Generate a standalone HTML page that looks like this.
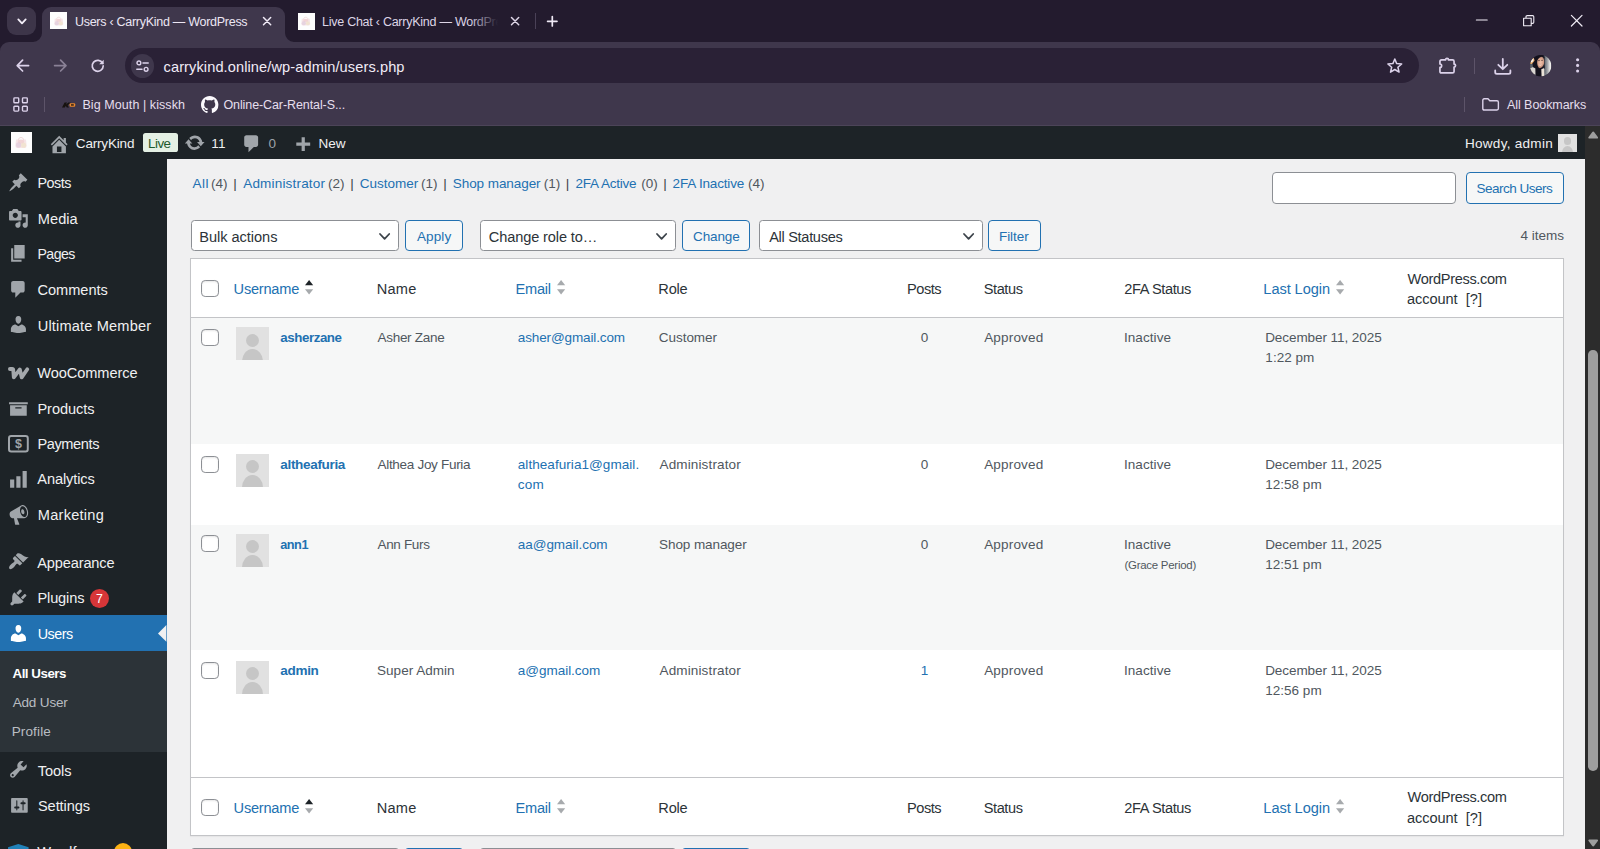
<!DOCTYPE html>
<html><head><meta charset="utf-8"><title>Users ‹ CarryKind — WordPress</title>
<style>
*{box-sizing:border-box;margin:0;padding:0}
html,body{width:1600px;height:849px;overflow:hidden;font-family:"Liberation Sans",sans-serif}
body{position:relative;background:#f0f0f1;font-family:"Liberation Sans",sans-serif}
.a{position:absolute}
.t{position:absolute;white-space:nowrap;display:block;line-height:20px}
svg{position:absolute;overflow:visible}
.sel{position:absolute;background:#fff;border:1px solid #8c8f94;border-radius:3.5px;height:31px;top:220px}
.btn{position:absolute;background:#f6f7f7;border:1px solid #2271b1;border-radius:4px;height:31px;top:220px}
.cb{position:absolute;width:17.2px;height:17.2px;left:201.4px;background:#fff;border:1.1px solid #8c8f94;border-radius:4.2px;box-shadow:inset 0 1px 2px rgba(0,0,0,.1)}
.av{position:absolute;left:235.6px;width:33.4px;height:33.2px;background:#e1e1e1;overflow:hidden}
.av i{position:absolute;background:#c6c6c6;border-radius:50%}
.av i.h{left:10.2px;top:6.6px;width:13.2px;height:13.2px}
.av i.b{left:6.6px;top:21.6px;width:20.4px;height:30px;border-radius:10.2px 10.2px 0 0/13px 13px 0 0}
.row{position:absolute;left:191.1px;width:1371.8px}
.ic{fill:#a0a5aa}
</style></head><body>

<!-- ============ BROWSER CHROME ============ -->
<div class="a" style="left:0;top:0;width:1600px;height:54px;background:#231b2e"></div>
<div class="a" style="left:0;top:41.8px;width:1600px;height:84px;background:#3f374c;border-radius:9px 9px 0 0"></div>
<!-- tab search button -->
<div class="a" style="left:6.8px;top:6.8px;width:29px;height:28.4px;background:#3d3549;border-radius:9px"></div>
<!-- active tab -->
<div class="a" style="left:42.2px;top:6.7px;width:242.4px;height:36.7px;background:#3f374c;border-radius:9px 9px 0 0"></div>
<svg style="left:33.2px;top:32.8px" width="9" height="9" viewBox="0 0 9 9"><path d="M9 0V9H0A9 9 0 0 0 9 0Z" fill="#3f374c"/></svg>
<svg style="left:284.6px;top:32.8px" width="9" height="9" viewBox="0 0 9 9"><path d="M0 0V9H9A9 9 0 0 1 0 0Z" fill="#3f374c"/></svg>
<!-- fade for 2nd tab title -->
<div class="a" style="left:470px;top:8px;width:36px;height:28px;background:linear-gradient(90deg,rgba(35,27,46,0),#231b2e 78%);z-index:5"></div>
<div class="a" style="left:534.6px;top:12.6px;width:1.2px;height:16.6px;background:#4a4157;z-index:6"></div>
<!-- url box -->
<div class="a" style="left:125.2px;top:48.4px;width:1294px;height:34.8px;background:#2a2136;border-radius:17.4px"></div>
<div class="a" style="left:0;top:124.6px;width:1600px;height:1.1px;background:#4c4458"></div>
<div class="a" style="left:130.6px;top:54px;width:23.8px;height:23.8px;background:#3f374c;border-radius:50%"></div>
<!-- toolbar separators -->
<div class="a" style="left:1474.2px;top:58.2px;width:1.3px;height:15.6px;background:#5d5469"></div>
<div class="a" style="left:44.2px;top:96.6px;width:1.3px;height:15.6px;background:#5d5469"></div>
<div class="a" style="left:1463.8px;top:96.6px;width:1.3px;height:15.6px;background:#5d5469"></div>
<svg style="left:16.9px;top:17.8px" width="10" height="7.6" viewBox="0 0 10 7.6"><path d="M1.300 1.400L5 5.400L8.700 1.400" fill="none" stroke="#f3eef8" stroke-width="1.8" stroke-linecap="round" stroke-linejoin="round" /></svg>
<div class="a" style="left:50px;top:12.4px;width:17px;height:17px;background:#fdfdfd"></div><svg style="left:53.57px;top:15.74px" width="9.53" height="9.85" viewBox="0 0 12 12.400"><path d="M3.300 4.200C3.300 .6 8.700 .6 8.700 4.200" fill="none" stroke="#eccfd0" stroke-width="1" opacity=".8"/><path d="M1 3.600H11L11.600 9.800Q11.600 12 9.600 12H2.400Q.4 12 .4 9.800z" fill="#f3dcdf" opacity=".75"/><ellipse cx="3.600" cy="9" rx="2.600" ry="2.800" fill="#dcc6dc" opacity=".6"/><ellipse cx="8.600" cy="9.200" rx="2.500" ry="2.600" fill="#f0e2c8" opacity=".7"/><ellipse cx="6" cy="5.600" rx="3.200" ry="1.800" fill="#eec3c6" opacity=".5"/></svg>
<div class="a" style="left:297.5px;top:12.5px;width:17px;height:17px;background:#fdfdfd"></div><svg style="left:301.07px;top:15.84px" width="9.53" height="9.85" viewBox="0 0 12 12.400"><path d="M3.300 4.200C3.300 .6 8.700 .6 8.700 4.200" fill="none" stroke="#eccfd0" stroke-width="1" opacity=".8"/><path d="M1 3.600H11L11.600 9.800Q11.600 12 9.600 12H2.400Q.4 12 .4 9.800z" fill="#f3dcdf" opacity=".75"/><ellipse cx="3.600" cy="9" rx="2.600" ry="2.800" fill="#dcc6dc" opacity=".6"/><ellipse cx="8.600" cy="9.200" rx="2.500" ry="2.600" fill="#f0e2c8" opacity=".7"/><ellipse cx="6" cy="5.600" rx="3.200" ry="1.800" fill="#eec3c6" opacity=".5"/></svg>
<svg style="left:262.7px;top:16.9px" width="8.2" height="8.2" viewBox="0 0 8.2 8.2"><path d="M0.500 0.500L7.699999999999999 7.699999999999999M7.699999999999999 0.500L0.500 7.699999999999999" fill="none" stroke="#f0eaf6" stroke-width="1.5" stroke-linecap="round" stroke-linejoin="round" /></svg>
<svg style="left:510.69999999999993px;top:17.1px" width="8.2" height="8.2" viewBox="0 0 8.2 8.2"><path d="M0.500 0.500L7.699999999999999 7.699999999999999M7.699999999999999 0.500L0.500 7.699999999999999" fill="none" stroke="#ddd5e6" stroke-width="1.5" stroke-linecap="round" stroke-linejoin="round" /></svg>
<svg style="left:547.4px;top:16.0px" width="10.6" height="10.6" viewBox="0 0 10.6 10.6"><path d="M5.300 .6V10M.6 5.300H10" fill="none" stroke="#efe9f5" stroke-width="1.7" stroke-linecap="round" stroke-linejoin="round" /></svg>
<svg style="left:1476px;top:18.5px" width="11.6" height="2" viewBox="0 0 11.6 2"><path d="M.4 1H11.200" fill="none" stroke="#f4f0f8" stroke-width="1.15" stroke-linecap="round" stroke-linejoin="round" /></svg>
<svg style="left:1523px;top:15px" width="11.4" height="11.4" viewBox="0 0 11.4 11.4"><path d="M.6 3.200H8.200V10.800H.6zM3 3V1.800Q3 .6 4.200 .6H9.600Q10.800 .6 10.800 1.800V7.200Q10.800 8.400 9.600 8.400H8.400" fill="none" stroke="#f1edf6" stroke-width="1.1" stroke-linecap="round" stroke-linejoin="round" /></svg>
<svg style="left:1571.2px;top:15px" width="11.4" height="11.4" viewBox="0 0 11.4 11.4"><path d="M.4 .4L11 11M11 .4L.4 11" fill="none" stroke="#f1edf6" stroke-width="1.2" stroke-linecap="round" stroke-linejoin="round" /></svg>
<svg style="left:16.4px;top:59.2px" width="13.2" height="13.2" viewBox="0 0 13.2 13.2"><path d="M12.600 6.600H1.400M6.600 1.200L1.200 6.600L6.600 12" fill="none" stroke="#dcd2ea" stroke-width="1.7" stroke-linecap="round" stroke-linejoin="round" /></svg>
<svg style="left:53.6px;top:59.2px" width="13.2" height="13.2" viewBox="0 0 13.2 13.2"><path d="M.6 6.600H11.800M6.600 1.200L12 6.600L6.600 12" fill="none" stroke="#8a8196" stroke-width="1.7" stroke-linecap="round" stroke-linejoin="round" /></svg>
<svg style="left:91.4px;top:59px" width="13.4" height="13.4" viewBox="0 0 13.4 13.4"><path d="M11.600 4.300A5.500 5.500 0 1 0 12.200 6.900" fill="none" stroke="#dcd2ea" stroke-width="1.7" stroke-linecap="round" stroke-linejoin="round" /><path d="M12.700 .7V5.200H8.200z" fill="#dcd2ea"/></svg>
<svg style="left:136.2px;top:59.8px" width="13" height="12.2" viewBox="0 0 13 12.2"><circle cx="2.900" cy="2.900" r="1.900" fill="none" stroke="#dcd2ea" stroke-width="1.400"/><path d="M7 2.900H12.200" fill="none" stroke="#dcd2ea" stroke-width="1.5" stroke-linecap="round" stroke-linejoin="round" /><circle cx="10.100" cy="9.300" r="1.900" fill="none" stroke="#dcd2ea" stroke-width="1.400"/><path d="M.8 9.300H6" fill="none" stroke="#dcd2ea" stroke-width="1.5" stroke-linecap="round" stroke-linejoin="round" /></svg>
<svg style="left:1386.6px;top:58.2px" width="15.6" height="15" viewBox="0 0 15.6 15"><path d="M7.800 1L9.700 5.600L14.700 6L10.900 9.200L12.100 14.100L7.800 11.500L3.500 14.100L4.700 9.200L.9 6L5.900 5.600z" fill="none" stroke="#dcd2ea" stroke-width="1.5" stroke-linecap="round" stroke-linejoin="round" /></svg>
<svg style="left:1438.6px;top:56.3px" width="17.9" height="17.9" viewBox="0 0 19 19"><path d="M2.600 4.200H6.900A1.600 1.600 0 0 1 10.100 4.200H14.400Q16 4.200 16 5.800V8.600A1.600 1.600 0 0 1 16 11.800V16.400Q16 18 14.400 18H2.600Q1 18 1 16.400V12.100A1.800 1.800 0 0 0 1 8.500V5.800Q1 4.200 2.600 4.200Z" fill="none" stroke="#dcd2ea" stroke-width="1.8" stroke-linecap="round" stroke-linejoin="round" /></svg>
<svg style="left:1494px;top:57.8px" width="17.6" height="17" viewBox="0 0 17.6 17"><path d="M8.800 1V11M4.300 6.800L8.800 11.200L13.300 6.800M1.200 12.400V14.200Q1.200 15.800 2.800 15.800H14.800Q16.400 15.800 16.400 14.200V12.400" fill="none" stroke="#dcd2ea" stroke-width="1.8" stroke-linecap="round" stroke-linejoin="round" /></svg>
<svg style="left:1529.7px;top:54.7px" width="21.4" height="21.4" viewBox="0 0 21.4 21.4"><defs><clipPath id="avc"><circle cx="10.700" cy="10.700" r="10.700"/></clipPath><radialGradient id="avf" cx=".55" cy=".5" r=".62"><stop offset="0" stop-color="#efc3ae"/><stop offset=".55" stop-color="#d6a089"/><stop offset="1" stop-color="#7c584c"/></radialGradient><linearGradient id="avw" x1="0" x2="1"><stop offset="0" stop-color="#4f5660"/><stop offset=".45" stop-color="#9a9ea3"/><stop offset=".8" stop-color="#e9e7e5"/><stop offset="1" stop-color="#f4f3f2"/></linearGradient></defs><g clip-path="url(#avc)"><rect width="21.400" height="21.400" fill="#15131f"/><rect x="13.800" y="0" width="7.600" height="21.400" fill="url(#avw)"/><path d="M0 3H3.800L4.600 5.500L2 9H0z" fill="#e3a768"/><path d="M.8 4.500L3.600 3.400L3.200 6.200L.6 8z" fill="#f7f3ee"/><path d="M0 12.800L2.600 12L5.600 13.600L5.800 19.600L3 21.400H0z" fill="#d9d5d1"/><path d="M0 9H2.500L3 12L0 13z" fill="#5a6068"/><ellipse cx="10.100" cy="7.200" rx="4.200" ry="6" fill="url(#avf)" transform="rotate(8 10.100 7.200)"/><path d="M8.300 9.300Q10.200 10.600 12 9.200Q10.300 11.900 8.300 9.300z" fill="#fbf3ef"/><path d="M8.200 5.700Q9 5.200 9.800 5.700M11.300 5.500Q12.100 5 12.900 5.500" stroke="#3a2a28" stroke-width=".7" fill="none"/><path d="M5.600 21.400V13L8.400 12.600Q9.800 14.800 11.600 13.600V21.400z" fill="#14121d"/><path d="M11.300 14.200L14.200 13L14.400 21.400H11.600z" fill="#ebe3d8"/><path d="M6.400 13.500C4.600 8.500 4.600 2.200 8 .8L12.500 0L14.800 1.500C11.500 1 8.600 2.200 7.400 5.200C6.800 7.500 7.200 10.500 8.600 12.600z" fill="#13111c"/><path d="M13.600 1.200C14.800 3.500 14.600 9 13.800 13L15 14V2z" fill="#2b2d36"/></g></svg>
<svg style="left:1576.2px;top:58.3px" width="3.2" height="15.4" viewBox="0 0 3.2 15.4"><circle cx="1.600" cy="1.700" r="1.550" fill="#dcd2ea"/><circle cx="1.600" cy="7.400" r="1.550" fill="#dcd2ea"/><circle cx="1.600" cy="13.100" r="1.550" fill="#dcd2ea"/></svg>
<svg style="left:12.6px;top:96.8px" width="15.4" height="15.2" viewBox="0 0 15.4 15.2"><rect x="0.9" y="0.9" width="4.800" height="4.800" rx=".8" fill="none" stroke="#dcd2ea" stroke-width="1.400"/><rect x="0.9" y="9.3" width="4.800" height="4.800" rx=".8" fill="none" stroke="#dcd2ea" stroke-width="1.400"/><rect x="9.5" y="0.9" width="4.800" height="4.800" rx=".8" fill="none" stroke="#dcd2ea" stroke-width="1.400"/><rect x="9.5" y="9.3" width="4.800" height="4.800" rx=".8" fill="none" stroke="#dcd2ea" stroke-width="1.400"/></svg>
<svg style="left:62.4px;top:101.6px" width="13.6" height="6" viewBox="0 0 13.6 6"><path d="M0 5.600L2.600 .4H5L3.800 2.800L6.400 .4H8.800L5.600 3.200L7 5.600H4.800L3.800 3.800L2.800 5.600z" fill="#17120f"/><rect x="7.600" y="1.200" width="5.600" height="3.600" rx="1" fill="#e8872b"/><rect x="9" y="2.300" width="2.800" height="1.300" fill="#17120f"/></svg>
<svg style="left:200.6px;top:95.6px" width="17.4" height="17.4" viewBox="0 0 16 16"><path fill="#fbf9fd" d="M8 0C3.580 0 0 3.580 0 8c0 3.540 2.290 6.530 5.470 7.590.4.070.55-.17.55-.38 0-.19-.01-.82-.01-1.490-2.010.37-2.530-.49-2.690-.94-.09-.23-.48-.94-.82-1.130-.28-.15-.68-.52-.01-.53.63-.01 1.080.58 1.230.82.72 1.210 1.870.87 2.330.66.070-.52.28-.87.51-1.070-1.780-.2-3.640-.89-3.640-3.950 0-.87.31-1.590.82-2.150-.08-.2-.36-1.020.08-2.120 0 0 .67-.21 2.200.82.64-.18 1.320-.27 2-.27s1.360.09 2 .27c1.530-1.040 2.200-.82 2.200-.82.44 1.100.16 1.920.08 2.120.51.56.82 1.270.82 2.150 0 3.070-1.870 3.750-3.650 3.950.29.25.54.73.54 1.480 0 1.070-.01 1.930-.01 2.200 0 .21.15.46.55.38A8.013 8.013 0 0016 8c0-4.420-3.580-8-8-8z"/></svg>
<svg style="left:1481.8px;top:98.2px" width="17.2" height="12.8" viewBox="0 0 17.2 12.8"><path d="M.8 2.200Q.8 .8 2.200 .8H6L7.800 2.800H15Q16.400 2.800 16.400 4.200V10.600Q16.400 12 15 12H2.200Q.8 12 .8 10.600z" fill="none" stroke="#dcd2ea" stroke-width="1.4" stroke-linecap="round" stroke-linejoin="round" /></svg>

<!-- ============ WP ADMIN BAR ============ -->
<div class="a" style="left:0;top:125.7px;width:1585px;height:33.5px;background:#1d2327"></div>
<div class="a" style="left:142.6px;top:133.4px;width:35.1px;height:18.4px;background:#e4f0e4;border-radius:2.6px"></div>
<svg style="left:48.40px;top:132.50px" width="22.4" height="22.4" viewBox="0 0 20 20"><path fill="#a0a5aa" d="M16 8.5l1.53 1.53-1.06 1.06L10 4.62l-6.47 6.47-1.06-1.06L10 2.5l4 4v-2h2v4zm-6-2.46l6 5.99V18H4v-5.97zM12 17v-5H8v5h4z"/></svg>
<svg style="left:184.20px;top:132.30px" width="21.4" height="21.4" viewBox="0 0 20 20"><path fill="#a0a5aa" d="M10.2 3.28c3.53 0 6.43 2.61 6.92 6h2.08l-3.5 4-3.5-4h2.32c-.45-1.97-2.21-3.45-4.32-3.45-1.45 0-2.73.71-3.54 1.78L4.95 5.66C6.23 4.2 8.11 3.28 10.2 3.28zm-.4 13.44c-3.52 0-6.43-2.61-6.92-6H.8l3.5-4c1.17 1.33 2.33 2.67 3.5 4H5.48c.45 1.97 2.21 3.45 4.32 3.45 1.45 0 2.73-.71 3.54-1.78l1.71 1.95c-1.28 1.46-3.15 2.38-5.25 2.38z"/></svg>
<svg style="left:241.30px;top:133.00px" width="21.4" height="21.4" viewBox="0 0 20 20"><path fill="#a0a5aa" d="M5 2h9c1.1 0 2 .9 2 2v7c0 1.1-.9 2-2 2h-2l-5 5v-5H5c-1.1 0-2-.9-2-2V4c0-1.1.9-2 2-2z"/></svg>
<svg style="left:292.30px;top:134.70px" width="21.4" height="21.4" viewBox="0 0 20 20"><path fill="#a0a5aa" d="M17 7v3h-5v5H9v-5H4V7h5V2h3v5h5z"/></svg>
<div class="a" style="left:10.7px;top:131.6px;width:21.4px;height:21.4px;background:#fdfdfd"></div>
<svg style="left:15.2px;top:135.8px" width="12" height="12.400" viewBox="0 0 12 12.400"><path d="M3.300 4.200C3.300 .6 8.700 .6 8.700 4.200" fill="none" stroke="#eccfd0" stroke-width="1" opacity=".8"/><path d="M1 3.600H11L11.600 9.800Q11.600 12 9.600 12H2.400Q.4 12 .4 9.800z" fill="#f3dcdf" opacity=".75"/><ellipse cx="3.600" cy="9" rx="2.600" ry="2.800" fill="#dcc6dc" opacity=".6"/><ellipse cx="8.600" cy="9.200" rx="2.500" ry="2.600" fill="#f0e2c8" opacity=".7"/><ellipse cx="6" cy="5.600" rx="3.200" ry="1.800" fill="#eec3c6" opacity=".5"/></svg>
<div class="a" style="left:1558.2px;top:133.8px;width:18.4px;height:18.4px;background:#e1e1e1;overflow:hidden"><i class="a" style="left:5.600px;top:3.600px;width:7.200px;height:7.200px;border-radius:50%;background:#c6c6c6"></i><i class="a" style="left:3.600px;top:11.800px;width:11.200px;height:16px;border-radius:5.600px 5.600px 0 0/7px 7px 0 0;background:#c6c6c6"></i></div>

<!-- ============ WP SIDEBAR ============ -->
<div class="a" style="left:0;top:159.2px;width:166.8px;height:690px;background:#1d2327"></div>
<div class="a" style="left:0;top:614.8px;width:166.8px;height:36.4px;background:#2271b1"></div>
<div class="a" style="left:0;top:651.2px;width:166.8px;height:100.8px;background:#2c3338"></div>
<svg style="left:158.4px;top:625.2px" width="8.4" height="16.8" viewBox="0 0 8.4 16.8"><path d="M8.4 0V16.8L0 8.4Z" fill="#f0f0f1"/></svg>
<div class="a" style="left:90px;top:589.2px;width:19px;height:19px;border-radius:50%;background:#d63638"></div>
<div class="a" style="left:114px;top:843.4px;width:18.4px;height:18.4px;border-radius:50%;background:#fcb214"></div>
<svg style="left:8.34px;top:172.19px" width="20.83" height="20.83" viewBox="0 0 20 20"><path fill="#a0a5aa" d="M10.44 3.02l1.82-1.82 6.36 6.35-1.83 1.82c-1.05-.68-2.48-.57-3.41.36l-.75.75c-.92.93-1.04 2.35-.35 3.41l-1.83 1.82-2.41-2.41-2.8 2.79c-.42.42-3.38 2.71-3.8 2.29s1.86-3.39 2.28-3.81l2.79-2.79L4.1 9.36l1.83-1.82c1.05.69 2.48.57 3.4-.36l.75-.75c.93-.92 1.05-2.35.36-3.41z"/></svg>
<svg style="left:8.34px;top:207.69px" width="20.83" height="20.83" viewBox="0 0 20 20"><path fill="#a0a5aa" d="M13 11V4c0-.55-.45-1-1-1h-1.67L9 1H5L3.67 3H2c-.55 0-1 .45-1 1v7c0 .55.45 1 1 1h10c.55 0 1-.45 1-1zM7 4.5c1.38 0 2.5 1.12 2.5 2.5S8.38 9.5 7 9.5 4.5 8.38 4.5 7 5.62 4.5 7 4.5zM14 6h5v10.5c0 1.38-1.12 2.5-2.5 2.5S14 17.88 14 16.5s1.12-2.5 2.5-2.5c.17 0 .34.02.5.05V9h-3V6zm-4 8.05V13h2v3.5c0 1.38-1.12 2.5-2.5 2.5S7 17.88 7 16.5 8.12 14 9.5 14c.17 0 .34.02.5.05z"/></svg>
<svg style="left:8.34px;top:243.49px" width="20.83" height="20.83" viewBox="0 0 20 20"><path fill="#a0a5aa" d="M6 15V2h10v13H6zm-1 1h8v2H3V5h2v11z"/></svg>
<svg style="left:8.34px;top:279.28px" width="20.83" height="20.83" viewBox="0 0 20 20"><path fill="#a0a5aa" d="M5 2h9c1.1 0 2 .9 2 2v7c0 1.1-.9 2-2 2h-2l-5 5v-5H5c-1.1 0-2-.9-2-2V4c0-1.1.9-2 2-2z"/></svg>
<svg style="left:8.34px;top:314.48px" width="20.83" height="20.83" viewBox="0 0 20 20"><path fill="#a0a5aa" d="M10 9.25c-2.27 0-2.73-3.44-2.73-3.44C7 4.02 7.82 2 9.97 2c2.16 0 2.98 2.02 2.71 3.81 0 0-.41 3.44-2.68 3.44zm0 2.57L12.72 10c2.39 0 4.52 2.33 4.52 4.53v2.49s-3.65 1.13-7.24 1.13c-3.65 0-7.24-1.13-7.24-1.13v-2.49c0-2.25 1.94-4.48 4.47-4.48z"/></svg>
<svg style="left:8px;top:366.5px" width="21.2" height="12.600" viewBox="0 0 21.2 12.600"><path d="M1.900 2H4.300Q5.150 2 5.250 3L5.800 10.400L11.850 2.400L13.700 10.400L19.300 2.200" fill="none" stroke="#a4a8ac" stroke-width="3.800" stroke-linecap="round" stroke-linejoin="round"/></svg>
<svg style="left:8.34px;top:397.78px" width="20.83" height="20.83" viewBox="0 0 20 20"><path fill="#a0a5aa" d="M19 4v2H1V4h18zM2 7h16v10H2V7zm11 3V9H7v1h6z"/></svg>
<svg style="left:8.3px;top:434.8px" width="20.8" height="17.4" viewBox="0 0 20.8 17.4"><rect x="1" y="1" width="18.8" height="15.4" rx="2.2" fill="none" stroke="#a0a5aa" stroke-width="2"/><text x="10.4" y="13.3" text-anchor="middle" font-family="Liberation Sans" font-weight="700" font-size="12.5" fill="#a0a5aa">$</text></svg>
<svg style="left:8.34px;top:468.58px" width="20.83" height="20.83" viewBox="0 0 20 20"><path fill="#a0a5aa" d="M18 18V2h-4v16h4zm-6 0V7H8v11h4zm-6 0v-8H2v8h4z"/></svg>
<svg style="left:8.15px;top:504.00px" width="21.8" height="21.8" viewBox="0 0 20 20"><path fill="#a0a5aa" d="M18.15 5.94c.46 1.62.38 3.22-.02 4.48-.42 1.28-1.26 2.18-2.3 2.48-.16.06-.26.06-.4.06-.06.02-.12.02-.18.02-.06.02-.14.02-.22.02h-6.8l2.22 5.5c.02.14-.06.26-.14.34-.08.1-.24.16-.34.16H6.95c-.1 0-.26-.06-.34-.16-.08-.08-.16-.2-.14-.34l-1-5.5H4.25l-.02-.02c-.5.06-1.08-.18-1.54-.62s-.88-1.08-1.06-1.88c-.24-.8-.2-1.56-.02-2.2.18-.62.58-1.08 1.06-1.3l.02-.02 9-5.4c.1-.06.18-.1.24-.16.06-.04.14-.08.24-.12.16-.08.28-.12.5-.18 1.04-.3 2.24.1 3.22.98s1.84 2.24 2.26 3.86zm-2.58 5.98h-.02c.4-.1.74-.34 1.04-.7.58-.7.86-1.76.86-3.04 0-.64-.1-1.3-.28-1.98-.34-1.36-1.02-2.5-1.78-3.24s-1.68-1.1-2.46-.88c-.82.22-1.4.96-1.7 2-.32 1.04-.28 2.36.06 3.72.38 1.36 1 2.5 1.8 3.24.78.74 1.62 1.1 2.48.88zm-2.54-7.08c.22-.04.42-.02.62.04.38.16.76.48 1.02 1s.42 1.2.42 1.78c0 .3-.04.56-.12.8-.18.48-.44.84-.86.94-.34.1-.8-.06-1.14-.4s-.64-.86-.78-1.5c-.18-.62-.12-1.24.02-1.72s.48-.84.82-.94z"/></svg>
<svg style="left:8.34px;top:551.49px" width="20.83" height="20.83" viewBox="0 0 20 20"><path fill="#a0a5aa" d="M14.48 11.06L7.41 3.99l1.5-1.5c.5-.56 2.3-.47 3.51.32 1.21.8 1.43 1.28 2.91 2.1 1.18.64 2.45 1.26 4.45.85zm-.71.71L6.7 4.7 4.93 6.47c-.39.39-.39 1.02 0 1.41l1.06 1.06c.39.39.39 1.03 0 1.42-.6.6-1.43 1.11-2.21 1.69-.35.26-.7.53-1.01.84C1.43 14.23.4 16.08 1.4 17.07c.99 1 2.84-.03 4.18-1.36.31-.31.58-.66.85-1.02.57-.78 1.08-1.61 1.69-2.21.39-.39 1.02-.39 1.41 0l1.06 1.06c.39.39 1.02.39 1.41 0z"/></svg>
<svg style="left:8.34px;top:587.09px" width="20.83" height="20.83" viewBox="0 0 20 20"><path fill="#a0a5aa" d="M13.11 4.36L9.87 7.6 8 5.73l3.24-3.24c.35-.34 1.05-.2 1.56.32.52.51.66 1.21.31 1.55zm-8 1.77l.91-1.12 9.01 9.01-1.19.84c-.71.71-2.63 1.16-3.82 1.16H6.14L4.9 17.26c-.59.59-1.54.59-2.12 0-.59-.58-.59-1.53 0-2.12l1.24-1.24v-3.88c0-1.13.4-3.19 1.09-3.89zm7.26 3.97l3.24-3.24c.34-.35 1.04-.21 1.55.31.52.51.66 1.21.31 1.55l-3.24 3.25z"/></svg>
<svg style="left:8.34px;top:622.69px" width="20.83" height="20.83" viewBox="0 0 20 20"><path fill="#fff" d="M10 9.25c-2.27 0-2.73-3.44-2.73-3.44C7 4.02 7.82 2 9.97 2c2.16 0 2.98 2.02 2.71 3.81 0 0-.41 3.44-2.68 3.44zm0 2.57L12.72 10c2.39 0 4.52 2.33 4.52 4.53v2.49s-3.65 1.13-7.24 1.13c-3.65 0-7.24-1.13-7.24-1.13v-2.49c0-2.25 1.94-4.48 4.47-4.48z"/></svg>
<svg style="left:8.34px;top:759.09px" width="20.83" height="20.83" viewBox="0 0 20 20"><path fill="#a0a5aa" d="M16.68 9.77c-1.34 1.34-3.3 1.67-4.95.99l-5.41 6.52c-.99.99-2.59.99-3.58 0s-.99-2.59 0-3.57l6.52-5.42c-.68-1.65-.35-3.61.99-4.95 1.28-1.28 3.12-1.62 4.72-1.06l-2.89 2.89 2.82 2.82 2.86-2.87c.53 1.58.18 3.39-1.08 4.65zM3.81 16.21c.4.39 1.04.39 1.43 0 .4-.4.4-1.04 0-1.43-.39-.4-1.03-.4-1.43 0-.39.39-.39 1.03 0 1.43z"/></svg>
<svg style="left:9.04px;top:794.69px" width="20.83" height="20.83" viewBox="0 0 20 20"><path fill="#a0a5aa" d="M18 16V4c0-.55-.45-1-1-1H3c-.55 0-1 .45-1 1v12c0 .55.45 1 1 1h14c.55 0 1-.45 1-1zM8 11h1c.55 0 1 .45 1 1s-.45 1-1 1H8v1.5c0 .28-.22.5-.5.5s-.5-.22-.5-.5V13H6c-.55 0-1-.45-1-1s.45-1 1-1h1V5.5c0-.28.22-.5.5-.5s.5.22.5.5V11zm5-2h-1c-.55 0-1-.45-1-1s.45-1 1-1h1V5.5c0-.28.22-.5.5-.5s.5.22.5.5V7h1c.55 0 1 .45 1 1s-.45 1-1 1h-1v5.5c0 .28-.22.5-.5.5s-.5-.22-.5-.5V9z"/></svg>
<svg style="left:8.4px;top:843.6px" width="20.6" height="20" viewBox="0 0 20.6 20"><path fill="#2181b8" d="M10.3 0L20.6 3.2V10c0 5-4 8.500-10.300 10C4 18.500 0 15 0 10V3.200z"/></svg>

<!-- ============ SCROLLBAR ============ -->
<div class="a" style="left:1585px;top:125.7px;width:15px;height:724px;background:#2c2c2c"></div>
<div class="a" style="left:1588px;top:349.5px;width:9.6px;height:421px;background:#9e9e9e;border-radius:4.8px"></div>
<svg style="left:1588px;top:131px" width="10.4" height="8" viewBox="0 0 10.4 8"><path d="M5.2 0.6Q5.8 0.6 6.3 1.3L10 6.2Q10.5 7.4 9.2 7.6H1.2Q-.1 7.4.4 6.2L4.1 1.3Q4.6.6 5.2.6Z" fill="#9e9e9e"/></svg>
<svg style="left:1588px;top:838.8px" width="10.4" height="8" viewBox="0 0 10.4 8"><path d="M5.2 7.4Q5.8 7.4 6.3 6.7L10 1.8Q10.5.6 9.2.4H1.2Q-.1.6.4 1.8L4.1 6.7Q4.6 7.4 5.2 7.4Z" fill="#9e9e9e"/></svg>

<!-- ============ CONTENT ============ -->
<!-- search box -->
<div class="a" style="left:1272.4px;top:172.2px;width:183.2px;height:31.4px;background:#fff;border:1px solid #8c8f94;border-radius:4px"></div>
<div class="btn" style="left:1465.6px;top:172.2px;width:98.3px;height:31.4px"></div>
<!-- tablenav -->
<div class="sel" style="left:191.1px;width:207.9px"></div>
<div class="btn" style="left:405px;width:57.6px"></div>
<div class="sel" style="left:480.2px;width:195.6px"></div>
<div class="btn" style="left:682px;width:68.2px"></div>
<div class="sel" style="left:759.2px;width:223.4px"></div>
<div class="btn" style="left:988px;width:52.8px"></div>
<!-- table -->
<div class="a" style="left:189.9px;top:258.3px;width:1374.1px;height:578px;background:#fff;border:1.1px solid #c3c4c7;box-shadow:0 1px 1px rgba(0,0,0,.04)"></div>
<div class="row" style="top:318px;height:126.2px;background:#f6f7f7"></div>
<div class="row" style="top:524.5px;height:125px;background:#f6f7f7"></div>
<div class="row" style="top:317px;height:1.1px;background:#c3c4c7"></div>
<div class="row" style="top:777px;height:1.1px;background:#c3c4c7"></div>
<!-- checkboxes -->
<div class="cb" style="top:279.8px"></div>
<div class="cb" style="top:329.2px"></div>
<div class="cb" style="top:456px"></div>
<div class="cb" style="top:535.2px"></div>
<div class="cb" style="top:661.8px"></div>
<div class="cb" style="top:799.2px"></div>
<!-- avatars -->
<div class="av" style="top:327.1px"><i class="h"></i><i class="b"></i></div>
<div class="av" style="top:453.7px"><i class="h"></i><i class="b"></i></div>
<div class="av" style="top:533.6px"><i class="h"></i><i class="b"></i></div>
<div class="av" style="top:660.5px"><i class="h"></i><i class="b"></i></div>
<svg style="left:305.4px;top:279.79999999999995px" width="8.2" height="14.6" viewBox="0 0 8.2 14.6"><path d="M4.100 0L8.200 5.300H0z" fill="#1d2327"/><path d="M0 9.200H8.200L4.100 14.500z" fill="#a7aaad"/></svg>
<svg style="left:557.1px;top:279.79999999999995px" width="8.2" height="14.6" viewBox="0 0 8.2 14.6"><path d="M4.100 0L8.200 5.300H0z" fill="#a7aaad"/><path d="M0 9.200H8.200L4.100 14.500z" fill="#a7aaad"/></svg>
<svg style="left:1335.6000000000001px;top:279.79999999999995px" width="8.2" height="14.6" viewBox="0 0 8.2 14.6"><path d="M4.100 0L8.200 5.300H0z" fill="#a7aaad"/><path d="M0 9.200H8.200L4.100 14.500z" fill="#a7aaad"/></svg>
<svg style="left:305.4px;top:799.3px" width="8.2" height="14.6" viewBox="0 0 8.2 14.6"><path d="M4.100 0L8.200 5.300H0z" fill="#1d2327"/><path d="M0 9.200H8.200L4.100 14.500z" fill="#a7aaad"/></svg>
<svg style="left:557.1px;top:799.3px" width="8.2" height="14.6" viewBox="0 0 8.2 14.6"><path d="M4.100 0L8.200 5.300H0z" fill="#a7aaad"/><path d="M0 9.200H8.200L4.100 14.500z" fill="#a7aaad"/></svg>
<svg style="left:1335.6000000000001px;top:799.3px" width="8.2" height="14.6" viewBox="0 0 8.2 14.6"><path d="M4.100 0L8.200 5.300H0z" fill="#a7aaad"/><path d="M0 9.200H8.200L4.100 14.500z" fill="#a7aaad"/></svg>
<svg style="left:379.3px;top:232.9px" width="11.2" height="7" viewBox="0 0 11.2 7"><path d="M1 1L5.600 5.800L10.200 1" fill="none" stroke="#3c434a" stroke-width="1.8" stroke-linecap="round" stroke-linejoin="round" /></svg>
<svg style="left:655.8000000000001px;top:232.9px" width="11.2" height="7" viewBox="0 0 11.2 7"><path d="M1 1L5.600 5.800L10.200 1" fill="none" stroke="#3c434a" stroke-width="1.8" stroke-linecap="round" stroke-linejoin="round" /></svg>
<svg style="left:962.6px;top:232.9px" width="11.2" height="7" viewBox="0 0 11.2 7"><path d="M1 1L5.600 5.800L10.200 1" fill="none" stroke="#3c434a" stroke-width="1.8" stroke-linecap="round" stroke-linejoin="round" /></svg>
<!-- bottom tablenav peeking -->
<div class="a" style="left:191px;top:847.6px;width:208.4px;height:6px;background:#fff;border:1px solid #8c8f94;border-radius:4px"></div>
<div class="a" style="left:405px;top:847.6px;width:57.6px;height:6px;background:#f6f7f7;border:1px solid #2271b1;border-radius:4px"></div>
<div class="a" style="left:480.2px;top:847.6px;width:195.6px;height:6px;background:#fff;border:1px solid #8c8f94;border-radius:4px"></div>
<div class="a" style="left:682px;top:847.6px;width:68.2px;height:6px;background:#f6f7f7;border:1px solid #2271b1;border-radius:4px"></div>

<span class="t" style="left:74.95px;top:12px;font-size:12.5px;color:#ece6f3;letter-spacing:-0.274px;">Users ‹ CarryKind — WordPress</span>
<span class="t" style="left:322px;top:12px;font-size:12.5px;color:#ddd5e6;letter-spacing:-0.252px;width:178px;overflow:hidden;">Live Chat ‹ CarryKind — WordPress</span>
<span class="t" style="left:163.54px;top:57px;font-size:14.6px;color:#f1ecf6;letter-spacing:0.096px;">carrykind.online/wp-admin/users.php</span>
<span class="t" style="left:82.4px;top:95px;font-size:12.5px;color:#e6dfee;letter-spacing:0.082px;">Big Mouth | kisskh</span>
<span class="t" style="left:223.45px;top:95px;font-size:12.5px;color:#e6dfee;letter-spacing:-0.094px;">Online-Car-Rental-S...</span>
<span class="t" style="left:1507px;top:95px;font-size:12.5px;color:#e6dfee;letter-spacing:-0.061px;">All Bookmarks</span>
<span class="t" style="left:75.87px;top:134px;font-size:13.54px;color:#f0f0f1;letter-spacing:-0.2px;">CarryKind</span>
<span class="t" style="left:148.06px;top:134px;font-size:13.366px;color:#1d5a2c;letter-spacing:-0.511px;">Live</span>
<span class="t" style="left:211.15px;top:134px;font-size:13.54px;color:#f0f0f1;letter-spacing:0.34px;">11</span>
<span class="t" style="left:268.58px;top:134px;font-size:13.54px;color:#9ca2a7;">0</span>
<span class="t" style="left:318.44px;top:134px;font-size:13.54px;color:#f0f0f1;letter-spacing:-0.047px;">New</span>
<span class="t" style="left:1464.94px;top:134px;font-size:13.54px;color:#f0f0f1;letter-spacing:0.276px;">Howdy, admin</span>
<span class="t" style="left:37.48px;top:173px;font-size:14.361px;color:#f0f0f1;letter-spacing:-0.461px;">Posts</span>
<span class="t" style="left:37.86px;top:209px;font-size:14.58px;color:#f0f0f1;letter-spacing:0.034px;">Media</span>
<span class="t" style="left:37.49px;top:244px;font-size:14.146px;color:#f0f0f1;letter-spacing:-0.541px;">Pages</span>
<span class="t" style="left:37.52px;top:280px;font-size:14.58px;color:#f0f0f1;letter-spacing:-0.021px;">Comments</span>
<span class="t" style="left:37.69px;top:316px;font-size:14.58px;color:#f0f0f1;letter-spacing:0.171px;">Ultimate Member</span>
<span class="t" style="left:37.3px;top:363px;font-size:14.58px;color:#f0f0f1;letter-spacing:-0.072px;">WooCommerce</span>
<span class="t" style="left:37.46px;top:399px;font-size:14.58px;color:#f0f0f1;letter-spacing:-0.077px;">Products</span>
<span class="t" style="left:37.46px;top:434px;font-size:14.58px;color:#f0f0f1;letter-spacing:-0.405px;">Payments</span>
<span class="t" style="left:37.3px;top:469px;font-size:14.58px;color:#f0f0f1;letter-spacing:-0.098px;">Analytics</span>
<span class="t" style="left:37.86px;top:505px;font-size:14.58px;color:#f0f0f1;letter-spacing:0.243px;">Marketing</span>
<span class="t" style="left:37.3px;top:553px;font-size:14.58px;color:#f0f0f1;letter-spacing:-0.149px;">Appearance</span>
<span class="t" style="left:37.46px;top:588px;font-size:14.58px;color:#f0f0f1;letter-spacing:-0.137px;">Plugins</span>
<span class="t" style="left:37.7px;top:624px;font-size:14.361px;color:#fff;letter-spacing:-0.514px;">Users</span>
<span class="t" style="left:37.67px;top:761px;font-size:14.58px;color:#f0f0f1;letter-spacing:-0.063px;">Tools</span>
<span class="t" style="left:37.94px;top:796px;font-size:14.58px;color:#f0f0f1;letter-spacing:-0.067px;">Settings</span>
<span class="t" style="left:37.3px;top:842px;font-size:14.58px;color:#f0f0f1;letter-spacing:0.132px;">Wordfence</span>
<span class="t" style="left:96.0px;top:589px;font-size:12.3px;color:#fff;">7</span>
<span class="t" style="left:12.49px;top:664px;font-size:13.337px;color:#fff;font-weight:700;letter-spacing:-0.472px;">All Users</span>
<span class="t" style="left:12.7px;top:693px;font-size:13.54px;color:#b9bdc2;letter-spacing:-0.182px;">Add User</span>
<span class="t" style="left:11.64px;top:722px;font-size:13.54px;color:#b9bdc2;letter-spacing:0.138px;">Profile</span>
<span class="t" style="left:192.5px;top:174px;font-size:13.54px;color:#2271b1;letter-spacing:0.423px;">All</span>
<span class="t" style="left:211.07px;top:174px;font-size:13.54px;color:#50575e;letter-spacing:-0.106px;">(4)</span>
<span class="t" style="left:233.24px;top:174px;font-size:13.54px;color:#3c434a;">|</span>
<span class="t" style="left:243.2px;top:174px;font-size:13.54px;color:#2271b1;letter-spacing:0.176px;">Administrator</span>
<span class="t" style="left:328.07px;top:174px;font-size:13.54px;color:#50575e;letter-spacing:-0.106px;">(2)</span>
<span class="t" style="left:350.24px;top:174px;font-size:13.54px;color:#3c434a;">|</span>
<span class="t" style="left:359.87px;top:174px;font-size:13.54px;color:#2271b1;letter-spacing:-0.041px;">Customer</span>
<span class="t" style="left:421.07px;top:174px;font-size:13.54px;color:#50575e;letter-spacing:-0.106px;">(1)</span>
<span class="t" style="left:443.24px;top:174px;font-size:13.54px;color:#3c434a;">|</span>
<span class="t" style="left:452.78px;top:174px;font-size:13.54px;color:#2271b1;letter-spacing:-0.085px;">Shop manager</span>
<span class="t" style="left:543.87px;top:174px;font-size:13.54px;color:#50575e;letter-spacing:-0.106px;">(1)</span>
<span class="t" style="left:565.74px;top:174px;font-size:13.54px;color:#3c434a;">|</span>
<span class="t" style="left:575.57px;top:174px;font-size:13.54px;color:#2271b1;letter-spacing:-0.248px;">2FA Active</span>
<span class="t" style="left:641.37px;top:174px;font-size:13.54px;color:#50575e;letter-spacing:-0.106px;">(0)</span>
<span class="t" style="left:663.24px;top:174px;font-size:13.54px;color:#3c434a;">|</span>
<span class="t" style="left:672.57px;top:174px;font-size:13.54px;color:#2271b1;letter-spacing:-0.184px;">2FA Inactive</span>
<span class="t" style="left:748.07px;top:174px;font-size:13.54px;color:#50575e;letter-spacing:-0.106px;">(4)</span>
<span class="t" style="left:199.36px;top:227px;font-size:14.58px;color:#2c3338;letter-spacing:-0.047px;">Bulk actions</span>
<span class="t" style="left:417px;top:227px;font-size:13.54px;color:#2271b1;letter-spacing:0.083px;">Apply</span>
<span class="t" style="left:488.82px;top:227px;font-size:14.58px;color:#2c3338;letter-spacing:-0.123px;">Change role to…</span>
<span class="t" style="left:693.07px;top:227px;font-size:13.54px;color:#2271b1;letter-spacing:-0.149px;">Change</span>
<span class="t" style="left:769.2px;top:227px;font-size:14.58px;color:#2c3338;letter-spacing:-0.312px;">All Statuses</span>
<span class="t" style="left:998.94px;top:227px;font-size:13.54px;color:#2271b1;letter-spacing:-0.053px;">Filter</span>
<span class="t" style="left:1476.58px;top:179px;font-size:13.54px;color:#2271b1;letter-spacing:-0.516px;">Search Users</span>
<span class="t" style="left:1520.49px;top:226px;font-size:13.54px;color:#50575e;letter-spacing:-0.001px;">4 items</span>
<span class="t" style="left:233.59px;top:279px;font-size:14.58px;color:#2271b1;letter-spacing:-0.222px;">Username</span>
<span class="t" style="left:376.86px;top:279px;font-size:14.58px;color:#2c3338;letter-spacing:0.179px;">Name</span>
<span class="t" style="left:515.56px;top:279px;font-size:14.58px;color:#2271b1;letter-spacing:-0.264px;">Email</span>
<span class="t" style="left:658.36px;top:279px;font-size:14.58px;color:#2c3338;letter-spacing:-0.252px;">Role</span>
<span class="t" style="left:907.06px;top:279px;font-size:14.58px;color:#2c3338;letter-spacing:-0.467px;">Posts</span>
<span class="t" style="left:983.74px;top:279px;font-size:14.58px;color:#2c3338;letter-spacing:-0.424px;">Status</span>
<span class="t" style="left:1124.32px;top:279px;font-size:14.58px;color:#2c3338;letter-spacing:-0.387px;">2FA Status</span>
<span class="t" style="left:1263.36px;top:279px;font-size:14.58px;color:#2271b1;letter-spacing:-0.069px;">Last Login</span>
<span class="t" style="left:1407.5px;top:269px;font-size:14.58px;color:#2c3338;letter-spacing:-0.332px;">WordPress.com</span>
<span class="t" style="left:1407.04px;top:289px;font-size:14.58px;color:#2c3338;letter-spacing:-0.11px;">account</span>
<span class="t" style="left:1465.79px;top:289px;font-size:14.58px;color:#2c3338;letter-spacing:0.031px;">[?]</span>
<span class="t" style="left:233.59px;top:798px;font-size:14.58px;color:#2271b1;letter-spacing:-0.222px;">Username</span>
<span class="t" style="left:376.86px;top:798px;font-size:14.58px;color:#2c3338;letter-spacing:0.179px;">Name</span>
<span class="t" style="left:515.56px;top:798px;font-size:14.58px;color:#2271b1;letter-spacing:-0.264px;">Email</span>
<span class="t" style="left:658.36px;top:798px;font-size:14.58px;color:#2c3338;letter-spacing:-0.252px;">Role</span>
<span class="t" style="left:907.06px;top:798px;font-size:14.58px;color:#2c3338;letter-spacing:-0.467px;">Posts</span>
<span class="t" style="left:983.74px;top:798px;font-size:14.58px;color:#2c3338;letter-spacing:-0.424px;">Status</span>
<span class="t" style="left:1124.32px;top:798px;font-size:14.58px;color:#2c3338;letter-spacing:-0.387px;">2FA Status</span>
<span class="t" style="left:1263.36px;top:798px;font-size:14.58px;color:#2271b1;letter-spacing:-0.069px;">Last Login</span>
<span class="t" style="left:1407.5px;top:787px;font-size:14.58px;color:#2c3338;letter-spacing:-0.332px;">WordPress.com</span>
<span class="t" style="left:1407.04px;top:808px;font-size:14.58px;color:#2c3338;letter-spacing:-0.11px;">account</span>
<span class="t" style="left:1465.79px;top:808px;font-size:14.58px;color:#2c3338;letter-spacing:0.031px;">[?]</span>
<span class="t" style="left:280.29px;top:328px;font-size:13.337px;color:#2271b1;font-weight:700;letter-spacing:-0.437px;">asherzane</span>
<span class="t" style="left:377.5px;top:328px;font-size:13.54px;color:#50575e;letter-spacing:-0.305px;">Asher Zane</span>
<span class="t" style="left:517.78px;top:328px;font-size:13.54px;color:#2271b1;letter-spacing:-0.135px;">asher@gmail.com</span>
<span class="t" style="left:658.87px;top:328px;font-size:13.54px;color:#50575e;letter-spacing:-0.069px;">Customer</span>
<span class="t" style="left:920.78px;top:328px;font-size:13.54px;color:#50575e;">0</span>
<span class="t" style="left:984.2px;top:328px;font-size:13.54px;color:#50575e;letter-spacing:0.157px;">Approved</span>
<span class="t" style="left:1123.94px;top:328px;font-size:13.54px;color:#50575e;letter-spacing:0.064px;">Inactive</span>
<span class="t" style="left:1265.14px;top:328px;font-size:13.54px;color:#50575e;letter-spacing:-0.082px;">December 11, 2025</span>
<span class="t" style="left:1265.35px;top:348px;font-size:13.54px;color:#50575e;letter-spacing:0.021px;">1:22 pm</span>
<span class="t" style="left:280.29px;top:455px;font-size:13.54px;color:#2271b1;font-weight:700;letter-spacing:-0.335px;">altheafuria</span>
<span class="t" style="left:377.5px;top:455px;font-size:13.54px;color:#50575e;letter-spacing:-0.314px;">Althea Joy Furia</span>
<span class="t" style="left:517.78px;top:455px;font-size:13.54px;color:#2271b1;letter-spacing:0.046px;">altheafuria1@gmail.</span>
<span class="t" style="left:659.5px;top:455px;font-size:13.54px;color:#50575e;letter-spacing:0.126px;">Administrator</span>
<span class="t" style="left:920.78px;top:455px;font-size:13.54px;color:#50575e;">0</span>
<span class="t" style="left:984.2px;top:455px;font-size:13.54px;color:#50575e;letter-spacing:0.157px;">Approved</span>
<span class="t" style="left:1123.94px;top:455px;font-size:13.54px;color:#50575e;letter-spacing:0.064px;">Inactive</span>
<span class="t" style="left:1265.14px;top:455px;font-size:13.54px;color:#50575e;letter-spacing:-0.082px;">December 11, 2025</span>
<span class="t" style="left:1265.35px;top:475px;font-size:13.54px;color:#50575e;letter-spacing:-0.015px;">12:58 pm</span>
<span class="t" style="left:280.15px;top:535px;font-size:12.746px;color:#2271b1;font-weight:700;letter-spacing:-0.453px;">ann1</span>
<span class="t" style="left:377.5px;top:535px;font-size:13.54px;color:#50575e;letter-spacing:-0.358px;">Ann Furs</span>
<span class="t" style="left:517.78px;top:535px;font-size:13.54px;color:#2271b1;letter-spacing:-0.052px;">aa@gmail.com</span>
<span class="t" style="left:659.08px;top:535px;font-size:13.54px;color:#50575e;letter-spacing:-0.103px;">Shop manager</span>
<span class="t" style="left:920.78px;top:535px;font-size:13.54px;color:#50575e;">0</span>
<span class="t" style="left:984.2px;top:535px;font-size:13.54px;color:#50575e;letter-spacing:0.157px;">Approved</span>
<span class="t" style="left:1123.94px;top:535px;font-size:13.54px;color:#50575e;letter-spacing:0.064px;">Inactive</span>
<span class="t" style="left:1265.14px;top:535px;font-size:13.54px;color:#50575e;letter-spacing:-0.082px;">December 11, 2025</span>
<span class="t" style="left:1265.35px;top:555px;font-size:13.54px;color:#50575e;letter-spacing:-0.015px;">12:51 pm</span>
<span class="t" style="left:280.29px;top:661px;font-size:13.54px;color:#2271b1;font-weight:700;letter-spacing:-0.326px;">admin</span>
<span class="t" style="left:377.08px;top:661px;font-size:13.54px;color:#50575e;letter-spacing:-0.009px;">Super Admin</span>
<span class="t" style="left:517.78px;top:661px;font-size:13.54px;color:#2271b1;letter-spacing:-0.035px;">a@gmail.com</span>
<span class="t" style="left:659.5px;top:661px;font-size:13.54px;color:#50575e;letter-spacing:0.126px;">Administrator</span>
<span class="t" style="left:920.75px;top:661px;font-size:13.54px;color:#2271b1;">1</span>
<span class="t" style="left:984.2px;top:661px;font-size:13.54px;color:#50575e;letter-spacing:0.157px;">Approved</span>
<span class="t" style="left:1123.94px;top:661px;font-size:13.54px;color:#50575e;letter-spacing:0.064px;">Inactive</span>
<span class="t" style="left:1265.14px;top:661px;font-size:13.54px;color:#50575e;letter-spacing:-0.082px;">December 11, 2025</span>
<span class="t" style="left:1265.35px;top:681px;font-size:13.54px;color:#50575e;letter-spacing:-0.015px;">12:56 pm</span>
<span class="t" style="left:517.78px;top:475px;font-size:13.54px;color:#2271b1;letter-spacing:0.273px;">com</span>
<span class="t" style="left:1124.5px;top:555px;font-size:11.46px;color:#50575e;letter-spacing:-0.26px;">(Grace Period)</span>
</body></html>
